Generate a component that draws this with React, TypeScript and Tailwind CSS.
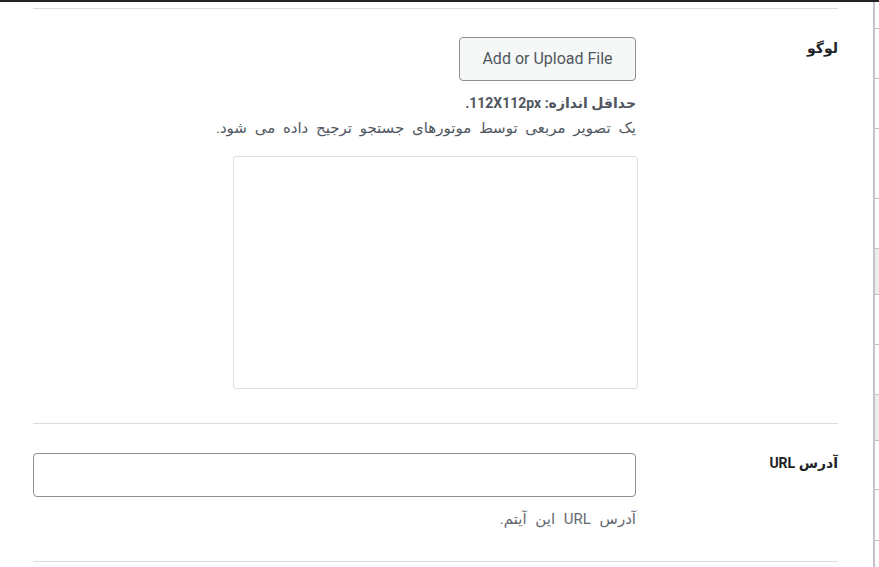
import React from "react";

const sideRows: { h: number; gray?: boolean }[] = [
  { h: 27 },
  { h: 50 },
  { h: 50 },
  { h: 70 },
  { h: 50 },
  { h: 46, gray: true },
  { h: 50 },
  { h: 50 },
  { h: 46, gray: true },
  { h: 49 },
  { h: 51 },
  { h: 40 },
];

export default function App() {
  return (
    <div
      className="w-[879px] h-[567px] bg-white overflow-hidden flex flex-col"
      style={{ fontFamily: 'Roboto, "DejaVu Sans", sans-serif' }}
    >
      <div className="h-[2px] bg-[#1d2327] shrink-0" />
      <div className="flex flex-1 min-h-0">
        {/* main content */}
        <div className="flex-1 pl-[33px] pr-[35px] pt-[6px]">
          <div className="h-px bg-[#dcdcde]" />
          {/* Logo row */}
          <div dir="rtl" className="flex pt-[28px] pb-[34px]">
            <div className="w-[202px] shrink-0 text-[14px] leading-[20px] font-bold text-[#1d2327] pt-[1px]">
              لوگو
            </div>
            <div className="w-[603px] flex flex-col items-start">
              <button
                dir="ltr"
                className="w-[177px] h-[44px] border border-[#8c8f94] rounded-[4px] bg-[#f6f7f7] text-[16px] text-[#50575e]"
              >
                Add or Upload File
              </button>
              <div className="mt-[10px] text-[#50575e]">
                <div className="font-bold text-[14px] leading-[25px]">حداقل اندازه: 112X112px.</div>
                <div className="text-[15px] leading-[25px] [word-spacing:4px]">
                  یک تصویر مربعی توسط موتورهای جستجو ترجیح داده می شود.
                </div>
              </div>
              <div className="mt-[15px] -mr-[2px] w-[405px] h-[233px] border border-[#e0e0e0] rounded-[3px] bg-white" />
            </div>
          </div>
          <div className="h-px bg-[#dcdcde]" />
          {/* URL row */}
          <div dir="rtl" className="flex pt-[29px] pb-[32px]">
            <div className="w-[202px] shrink-0 text-[14px] leading-[20px] font-bold text-[#1d2327]">
              آدرس URL
            </div>
            <div className="w-[603px] flex flex-col items-start">
              <input
                className="w-[603px] h-[44px] border border-[#8c8f94] rounded-[4px] bg-white outline-none"
                type="text"
              />
              <div className="mt-[12px] text-[15px] leading-[20px] [word-spacing:5px] text-[#646970]">
                آدرس URL این آیتم.
              </div>
            </div>
          </div>
          <div className="h-px bg-[#dcdcde]" />
        </div>
        {/* right sidebar edge */}
        <div className="w-[6px] shrink-0 border-l-2 border-[#c3c4c7] flex flex-col">
          {sideRows.map((r, i) => (
            <div
              key={i}
              className={
                (r.gray ? "bg-[#ececee] " : "bg-white ") +
                "border-b border-[#c3c4c7] shrink-0"
              }
              style={{ height: r.h }}
            />
          ))}
        </div>
      </div>
    </div>
  );
}
